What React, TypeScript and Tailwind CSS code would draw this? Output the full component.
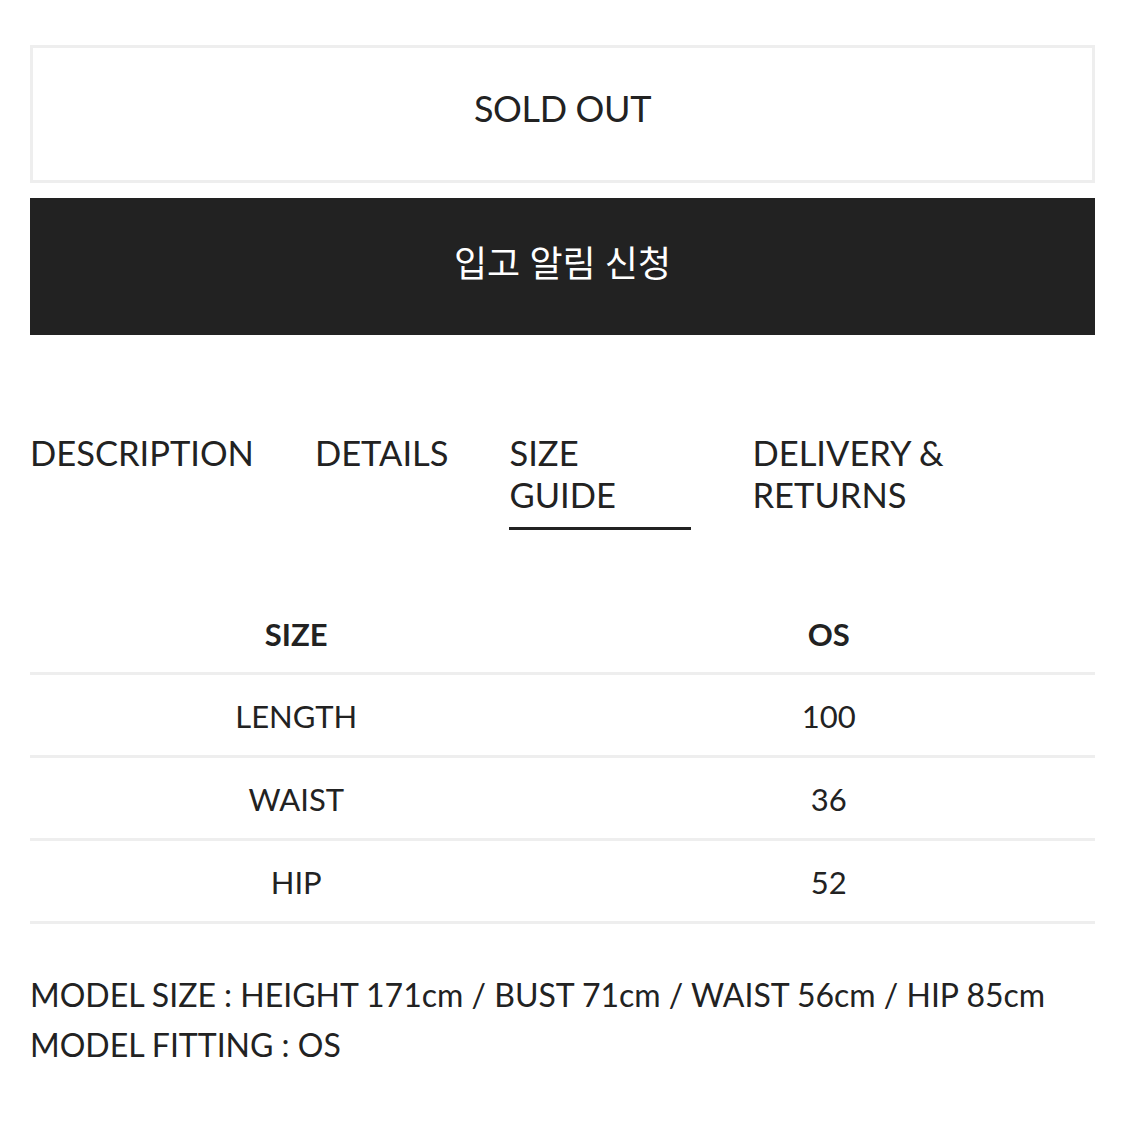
import React from 'react'

const font = { fontFamily: 'Lato, "Noto Sans CJK KR", sans-serif' }

const rows = [
  ['LENGTH', '100'],
  ['WAIST', '36'],
  ['HIP', '52'],
]

const tabs = [
  { label: 'DESCRIPTION', w: '', active: false },
  { label: 'DETAILS', w: '', active: false },
  { label: 'SIZE GUIDE', w: 'w-[182px]', active: true },
  { label: 'DELIVERY & RETURNS', w: 'w-[200px]', active: false },
]

export default function App() {
  return (
    <div className="min-h-[1125px] bg-white px-[30px] pt-[45px] text-[#222]" style={font}>
      <button className="flex h-[138px] w-full items-center justify-center border-[3px] border-[#eeeeee] bg-white pb-[12px] text-[36px] tracking-[-0.01em] text-[#222]">
        SOLD OUT
      </button>
      <button className="mt-[15px] flex h-[137px] w-full items-center justify-center bg-[#222222] pb-[8px] text-[36px] text-white">
        입고 알림 신청
      </button>

      <nav className="mt-[97px] flex items-start gap-[61px]">
        {tabs.map((t) => (
          <div
            key={t.label}
            className={`${t.w} pb-[11px] text-[34.5px] leading-[42px] ${t.active ? 'border-b-[3px] border-[#222]' : 'border-b-[3px] border-transparent'}`}
          >
            <span className={t.active ? 'block w-[120px]' : 'block'}>{t.label}</span>
          </div>
        ))}
      </nav>

      <table className="mt-[60px] w-full table-fixed border-collapse text-[31px]">
        <thead>
          <tr className="border-b-[3px] border-[#eeeeee]">
            <th className="h-[83px] pt-[6px] text-center font-bold">SIZE</th>
            <th className="h-[83px] pt-[6px] text-center font-bold">OS</th>
          </tr>
        </thead>
        <tbody>
          {rows.map(([k, v]) => (
            <tr key={k} className="border-b-[3px] border-[#eeeeee]">
              <td className="h-[83px] pt-[3px] text-center">{k}</td>
              <td className="h-[83px] pt-[3px] text-center">{v}</td>
            </tr>
          ))}
        </tbody>
      </table>

      <div className="mt-[46px] text-[32px] leading-[50px]">
        <p>MODEL SIZE : HEIGHT 171cm / BUST 71cm / WAIST 56cm / HIP 85cm</p>
        <p>MODEL FITTING : OS</p>
      </div>
    </div>
  )
}
